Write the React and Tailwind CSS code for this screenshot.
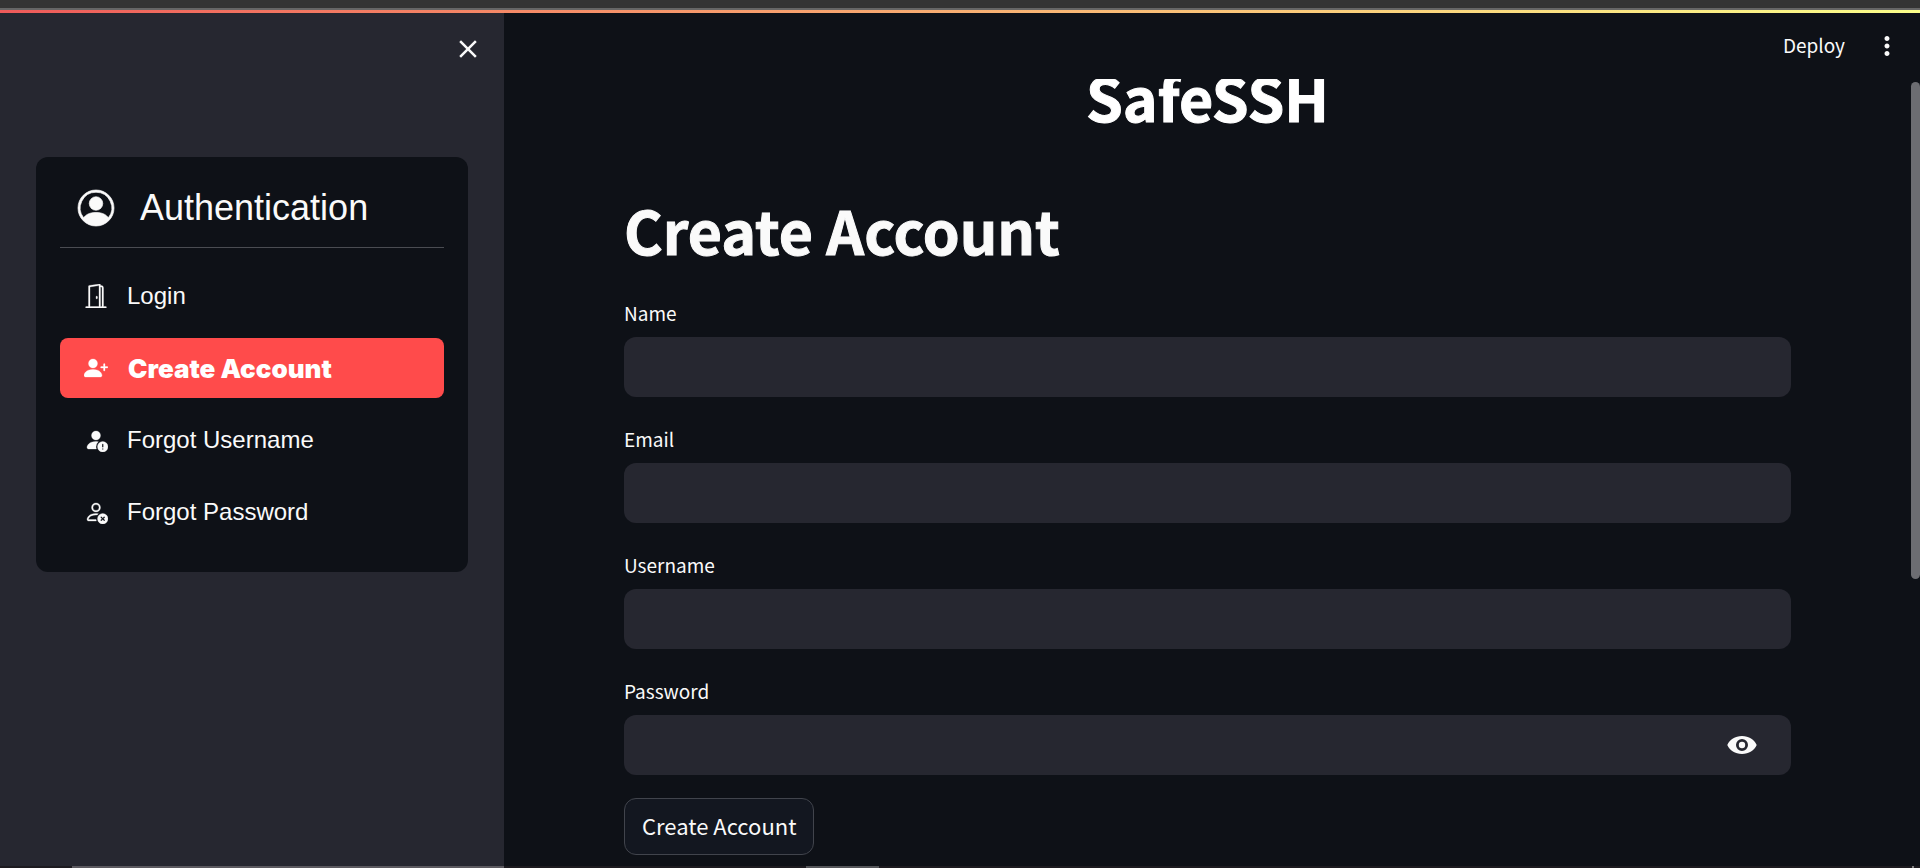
import { BsDoorOpen, BsPersonCircle, BsPersonFillExclamation, BsPersonPlusFill, BsPersonX } from "react-icons/bs";
import { MdClose, MdMoreVert } from "react-icons/md";

const menu = [
  { label: "Login", Icon: BsDoorOpen },
  { label: "Create Account", Icon: BsPersonPlusFill, active: true },
  { label: "Forgot Username", Icon: BsPersonFillExclamation },
  { label: "Forgot Password", Icon: BsPersonX },
];

function EyeIcon() {
  return (
    <svg viewBox="0 0 30 18" className="h-[18px] w-[30px]" fill="currentColor" aria-hidden="true">
      <path
        fillRule="evenodd"
        d="M15 0C8 0 2.8 3.6.3 9 2.8 14.400 8 18 15 18s12.200-3.600 14.700-9C27.200 3.600 22 0 15 0Zm0 15a6 6 0 1 1 0-12 6 6 0 0 1 0 12Z"
      />
      <circle cx="15" cy="9" r="3.200" />
    </svg>
  );
}

function Field({ id, label, type = "text", children }) {
  return (
    <div className="flex flex-col">
      <label htmlFor={id} className="mb-2 text-[19px] leading-8">
        {label}
      </label>
      <div className="flex h-[60px] items-center rounded-xl bg-[#262730] pr-[34px]">
        <input id={id} type={type} className="h-full min-w-0 flex-1 bg-transparent px-4 text-[22px] outline-none" />
        {children}
      </div>
    </div>
  );
}

function Sidebar() {
  return (
    <aside className="flex w-[504px] shrink-0 flex-col bg-[#262730] px-9 font-['Liberation_Sans',sans-serif]">
      <div className="flex h-36 items-start justify-end pt-[21px]">
        <button type="button" aria-label="Close sidebar" className="-mr-[15px]">
          <MdClose className="size-[30px]" />
        </button>
      </div>
      <nav className="rounded-xl bg-[#0e1117] px-6 pt-6 pb-[30px]">
        <h2 className="flex h-[67px] items-center gap-[26px] border-b border-[#4a4c52] px-[18px] pb-3 text-4xl">
          <BsPersonCircle className="size-9 overflow-visible stroke-[0.3]" />
          Authentication
        </h2>
        <ul className="mt-[18px] flex flex-col gap-3">
          {menu.map(({ label, Icon, active }) => (
            <li key={label}>
              <a
                href="#"
                aria-current={active ? "page" : undefined}
                className={
                  active
                    ? "flex h-[60px] items-center gap-5 rounded-lg bg-[#ff4b4b] px-6 font-['Inter',sans-serif] text-[26px] font-black text-white"
                    : "flex h-[60px] items-center gap-[19px] rounded-lg px-6 text-2xl"
                }
              >
                <Icon className="size-6 stroke-[0.2]" />
                {label}
              </a>
            </li>
          ))}
        </ul>
      </nav>
    </aside>
  );
}

export default function App() {
  return (
    <div className="flex min-h-screen flex-col bg-[#0e1117] font-['Noto_Sans_CJK_SC',sans-serif] text-[#fafafa]">
      <div className="h-2 bg-[#343434]" />
      <div className="h-0.5 bg-[#666666]" />
      <div className="h-[3px] bg-linear-to-r from-[#ee5a5a] via-[#f8ae72] to-[#fbff8a]" />
      <div className="flex flex-1">
        <Sidebar />
        <main className="relative flex min-w-0 flex-1 flex-col">
          <header className="flex h-[66px] items-center justify-end gap-[27px] pr-[18px] pb-px">
            <button type="button" className="text-[19px]">
              Deploy
            </button>
            <button type="button" aria-label="Menu">
              <MdMoreVert className="size-[30px]" />
            </button>
          </header>
          <div className="flex flex-col overflow-hidden pr-[129px] pl-[120px]">
            <h1 className="text-center text-[59px] leading-[36px] font-bold text-white [-webkit-text-stroke:1px]">
              SafeSSH
            </h1>
            <form className="mt-[75px] flex flex-col">
              <h2 className="mb-[27px] text-[59px] leading-[80px] font-bold [-webkit-text-stroke:1px]">Create Account</h2>
              <div className="flex flex-col gap-[26px]">
                <Field id="name" label="Name" />
                <Field id="email" label="Email" type="email" />
                <Field id="username" label="Username" />
                <Field id="password" label="Password" type="password">
                  <button type="button" aria-label="Show password">
                    <EyeIcon />
                  </button>
                </Field>
              </div>
              <button
                type="button"
                className="mt-[23px] h-[57px] self-start rounded-xl border border-[#41444c] bg-[#131720] px-[17px] pb-[3px] text-[22px]"
              >
                Create Account
              </button>
            </form>
          </div>
          <div className="absolute top-[69px] right-0 h-[497px] w-[9px] rounded-full bg-[#6c6d72]" />
        </main>
      </div>
      <div className="flex h-0.5 bg-[#1d1b20]">
        <div className="ml-[72px] w-[432px] bg-[#5c5a60]" />
        <div className="ml-[302px] w-[73px] bg-[#55565a]" />
        <div className="mr-[6px] ml-auto w-0.5 bg-[#808080]" />
      </div>
    </div>
  );
}
